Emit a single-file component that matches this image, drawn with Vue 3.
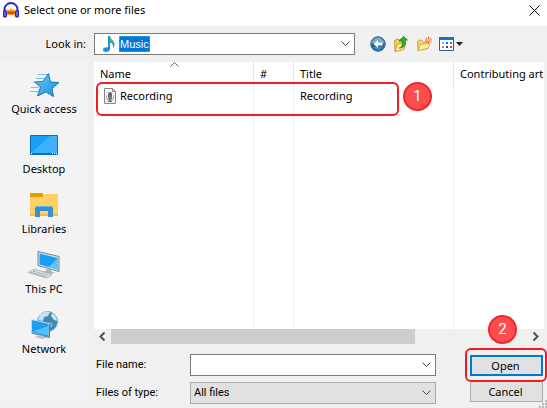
<template>
  <div class="dialog">
    <header class="titlebar">
      <svg class="app-icon" viewBox="0 0 16 16">
        <path d="M1.500 10V7.500a6.500 6.500 0 0 1 13 0V10" fill="none" stroke="#2a2ad0" stroke-width="2" />
        <path d="M3 10 4.500 7 6.500 8 8 5.500 9.500 8 11.500 7 13 10 11.500 13.500 8 12.500 4.500 13.500Z" fill="#ffb400" />
        <path d="M3.500 11 6 9 7 10 8 8 9 10 10 9 12.500 11 10 12 8 12.500 6 12Z" fill="#ec3414" />
        <rect x="0" y="8" width="4" height="7.500" rx="1.500" fill="#2424cc" />
        <rect x="12" y="8" width="4" height="7.500" rx="1.500" fill="#2424cc" />
        <path d="M2 9.500v4.500M14 9.500v4.500" stroke="#9fa8f4" />
      </svg>
      <h1 class="title">Select one or more files</h1>
      <button class="plain close" aria-label="Close">
        <svg width="11" height="11" viewBox="0 0 11 11"><path d="M.5.5l10 10M10.500.5l-10 10" stroke="#111" fill="none" /></svg>
      </button>
    </header>

    <div class="toolbar">
      <label class="look-label" for="look-in">Look in:</label>
      <div class="look-box">
        <svg class="note" width="12" height="16" viewBox="0 0 12 16">
          <path d="M5 0h2c0 4 5 4 4.500 9-.2 1.500-1 2.500-1.500 3 .5-3-.5-4.500-3-5.500V13c0 2-2 3-4 3s-3-1-3-2.300C0 12 2 11 5 11.500Z" fill="#1e8fe0" />
          <path d="M7 1c1 3 5 4 4.500 8-1-2.500-3-3-4.500-4Z" fill="#55c43a" />
        </svg>
        <select id="look-in" v-model="folder" class="look-select">
          <option>Music</option>
        </select>
        <svg class="chevron" width="9" height="6" viewBox="0 0 9 6"><path d="M.5.5l4 4 4-4" /></svg>
      </div>
      <nav class="tools">
        <button class="plain" aria-label="Back">
          <svg width="16" height="16" viewBox="0 0 16 16">
            <circle cx="8" cy="8" r="7.300" fill="#276399" stroke="#4a7596" />
            <path d="M1.500 8a6.500 6.500 0 0 1 13 0c-3-2-9-2-13 0Z" fill="#7ba7c9" />
            <path d="M3 10.500c2 4 8 4 10 0-2 1-8 1-10 0Z" fill="#2c9bdc" />
            <path d="M3.500 8 8 4v2.600h4.500v2.800H8V12Z" fill="#fff" />
          </svg>
        </button>
        <button class="plain" aria-label="Up one level">
          <svg width="16" height="16" viewBox="0 0 16 16">
            <path d="M1.500 4.500 5 3l1 1 4-1v10l-8 2.500Z" fill="#f1cf62" stroke="#c99f35" />
            <path d="M2 15.500 4.500 8 13 6l-2 7.500Z" fill="#fdeb94" stroke="#cda638" />
            <path d="M6.500 12c3-1 3-3 2.500-7H6l4.500-4.500L14.500 4h-2.300c.6 5-.7 8-5.700 8Z" fill="#35ad2d" stroke="#187e19" stroke-width=".8" />
          </svg>
        </button>
        <button class="plain" aria-label="Create new folder">
          <svg width="16" height="16" viewBox="0 0 16 16">
            <path d="M1.500 5.500 3 4l3 .5 1 1.500 5-.5v7L2 14.500Z" fill="#f3d36c" stroke="#d0a743" />
            <path d="M2 14.500 4 8.500l10-1.500-2 5.500Z" fill="#fdeb9e" stroke="#d7b04c" />
            <path d="M12.500.5v7M9 4h7M10 1.500l5 5M15 1.500l-5 5" stroke="#ee5c2a" />
            <circle cx="12.500" cy="4" r="1.500" fill="#ffc25b" />
          </svg>
        </button>
        <button class="plain" aria-label="View menu">
          <svg width="25" height="14" viewBox="0 0 25 14">
            <path d="M.5.5h14v13H.5Z" fill="#fff" stroke="#1863ad" />
            <path d="M0 0h15v3H0Z" fill="#1674c8" />
            <path d="M3 5h2v2H3Z" fill="#a5abb9" /><path d="M7 5h2v2H7Z" fill="#2265d5" /><path d="M11 5h2v2h-2Z" fill="#2e9a45" />
            <path d="M3 9h2v2H3Z" fill="#ee7447" /><path d="M7 9h2v2H7Z" fill="#1c3fae" /><path d="M11 9h2v2h-2Z" fill="#bd454a" />
            <path d="M17 5h7l-3.500 4Z" fill="#222" />
          </svg>
        </button>
      </nav>
    </div>

    <div class="body">
      <aside class="places">
        <button v-for="place in places" :key="place" class="plain place">
          <svg v-if="place === 'Quick access'" width="32" height="32" viewBox="0 0 32 32">
            <defs>
              <linearGradient id="star" x1="0" y1="0" x2="1" y2="1"><stop stop-color="#69c9f5" /><stop offset="1" stop-color="#168edb" /></linearGradient>
            </defs>
            <path d="M10 5.500h11M8 9.500h9M3 18.500h8M2 22.500h8M10 13.500h5" stroke="#7cbfe9" />
            <path d="M20.500 4.500 22.500 13l8.500.5-7 6L25.500 27.500l-7.500-4.500-8.500 4 3-9-6-5 8.500-.5Z" fill="url(#star)" stroke="#1878b9" />
          </svg>
          <svg v-else-if="place === 'Desktop'" width="32" height="32" viewBox="0 0 32 32">
            <path d="M2.500 6.500h27v19h-27Z" fill="#18a0fb" stroke="#0871bb" />
            <path d="M3 24 22 7h7v17Z" fill="#41b0fb" />
            <path d="M3 24.500h26" stroke="#0773bd" />
            <path d="M3 24.500h1M24 24.500h1M26 24.500h1M28 24.500h1" stroke="#fff" />
          </svg>
          <svg v-else-if="place === 'Libraries'" width="32" height="32" viewBox="0 0 32 32">
            <path d="M2 4h12l2 2v3H2Z" fill="#e29c04" />
            <path d="M2 8h12l3-3h13v22H2Z" fill="#ffd163" />
            <path d="M2 25h28v2H2Z" fill="#f5bd43" />
            <path d="M9 17h14l2 2v9h-5v-6h-8v6H7v-9Z" fill="#378fcf" />
            <path d="M8 17.500h16" stroke="#67b5e7" />
          </svg>
          <svg v-else-if="place === 'This PC'" width="32" height="32" viewBox="0 0 32 32">
            <path d="M10 2.500 31 7.500v15L10 16.500Z" fill="#d9e4e9" stroke="#71848e" />
            <path d="M11.500 4.500 29.500 9v11.500l-18-5Z" fill="#159ff5" />
            <path d="M29.500 9v11.500L21 18Z" fill="#5cc3fb" />
            <path d="m19 19 5 1.500-1 2 4 1-4 1.500-9-2.500 4-.5Z" fill="#aab5bb" />
            <path d="m6 20 18 5.500-5 3.500L0 23.500Z" fill="#dbe0e3" stroke="#9ea8ad" stroke-width=".7" />
            <path d="m5 22 15 4.500M3 23.500l15 4.500" stroke="#929da3" stroke-dasharray="2 1" />
          </svg>
          <svg v-else width="32" height="32" viewBox="0 0 32 32">
            <circle cx="19.500" cy="12.500" r="10" fill="#3f88b4" stroke="#77a5bd" />
            <path d="M12 5c4-3 8-3 10-2l-2 4-4 1-1 4-5-1ZM24 4c4 2 5 5 5 8l-3-1-3-4Z" fill="#c2e3ef" />
            <path d="m21 13 4 1-1 5-3-2Z" fill="#69add0" />
            <path d="M3.500 10.500 21 14.500v14L3.500 23.500Z" fill="#1a9ff2" stroke="#c7dbe5" />
            <path d="M5 22.500 20 17v9.500Z" fill="#53befa" />
            <path d="M21.500 15v13.500L3.500 24" stroke="#567b90" fill="none" />
            <path d="m11 26 4 1 5 2-6 1-7-2Z" fill="#b8c2c7" />
          </svg>
          <span>{{ place }}</span>
        </button>
      </aside>

      <main class="content">
        <div class="list">
          <table class="files">
            <colgroup><col class="c-name" /><col class="c-num" /><col class="c-title" /><col /></colgroup>
            <thead>
              <tr><th>Name</th><th>#</th><th>Title</th><th>Contributing art</th></tr>
            </thead>
            <tbody>
              <tr v-for="file in files" :key="file.name" class="file-row">
                <td>
                  <div class="file-name">
                    <svg width="12" height="16" viewBox="0 0 12 16">
                      <path d="M.5.5h8l3 3v12H.5Z" fill="#f4f4f4" stroke="#868686" />
                      <path d="M8.500.5v3h3" fill="none" stroke="#868686" />
                      <path d="M2.500 7.500v2a3.500 3 0 0 0 7 0v-2" fill="none" stroke="#a0a0a0" />
                      <rect x="4" y="4" width="4" height="8" rx="2" fill="#606974" />
                      <path d="M4 9.500h4" stroke="#e8662c" /><path d="M6 12v2M4 13.500h4" stroke="#666" />
                    </svg>
                    {{ file.name }}
                  </div>
                </td>
                <td></td><td>{{ file.title }}</td><td></td>
              </tr>
              <tr class="filler"><td></td><td></td><td></td><td></td></tr>
            </tbody>
          </table>
          <svg class="sort" width="9" height="5" viewBox="0 0 9 5"><path d="M.5 4.500l4-4 4 4" fill="none" stroke="#666" /></svg>
          <div class="mark mark-file"></div>
          <span class="badge badge-one">1</span>
        </div>
        <div class="scrollbar">
          <button class="plain arrow" aria-label="Scroll left"><svg width="7" height="9" viewBox="0 0 7 9"><path d="M5.500.5l-4 4 4 4" /></svg></button>
          <div class="track"><div class="thumb"></div></div>
          <button class="plain arrow" aria-label="Scroll right"><svg width="7" height="9" viewBox="0 0 7 9"><path d="M1.500.5l4 4-4 4" /></svg></button>
        </div>
        <form class="form" @submit.prevent>
          <div class="fields">
            <div class="field">
              <label for="file-name">File name:</label>
              <div class="combo">
                <input id="file-name" v-model="fileName" type="text" />
                <svg class="chevron" width="9" height="6" viewBox="0 0 9 6"><path d="M.5.5l4 4 4-4" /></svg>
              </div>
            </div>
            <div class="field">
              <label for="file-type">Files of type:</label>
              <div class="combo gray">
                <select id="file-type" v-model="fileType"><option>All files</option></select>
                <svg class="chevron" width="9" height="6" viewBox="0 0 9 6"><path d="M.5.5l4 4 4-4" /></svg>
              </div>
            </div>
          </div>
          <div class="actions">
            <button class="btn primary" type="submit">Open</button>
            <button class="btn" type="button">Cancel</button>
            <div class="mark mark-open"></div>
            <span class="badge badge-two">2</span>
          </div>
        </form>
      </main>
    </div>
    <svg class="grip" width="8" height="8" viewBox="0 0 8 8"><path d="M6 0h2v2H6ZM3 3h2v2H3ZM6 3h2v2H6ZM0 6h2v2H0ZM3 6h2v2H3ZM6 6h2v2H6Z" fill="#bbb" /></svg>
  </div>
</template>

<script setup>
import { ref } from 'vue';

const places = ['Quick access', 'Desktop', 'Libraries', 'This PC', 'Network'];
const files = ref([{ name: 'Recording', title: 'Recording' }]);

const folder = ref('Music');
const fileName = ref('');
const fileType = ref('All files');
</script>

<style>
body {
  margin: 0;
}
</style>

<style scoped>
* {
  box-sizing: border-box;
}

.dialog {
  position: relative;
  display: flex;
  flex-direction: column;
  height: 100vh;
  background: #f0f0f0;
  color: #000;
  font-family: "Noto Sans", "Open Sans", sans-serif;
  font-size: 11px;
  line-height: 16px;
  overflow: hidden;
}

svg {
  display: block;
  flex: none;
}

button,
input,
select {
  font: inherit;
  color: inherit;
}

.plain {
  border: 0;
  padding: 0;
  background: none;
}

.titlebar {
  display: flex;
  align-items: center;
  height: 26px;
  padding: 0 7px 6px 3px;
  background: #fff;
}

.app-icon {
  width: 16px;
  height: 16px;
}

.title {
  flex: 1;
  margin: 0 0 0 5px;
  font-size: 11px;
  font-weight: 400;
}

.toolbar {
  display: flex;
  align-items: center;
  height: 36px;
}

.look-label {
  width: 94px;
  padding-right: 8px;
  text-align: right;
}

.look-box {
  display: flex;
  align-items: center;
  flex: 0 1 261px;
  height: 22px;
  padding: 0 4px 0 8px;
  border: 1px solid #7a7a7a;
  background: #fff;
}

.look-select {
  appearance: none;
  margin-left: 4px;
  padding: 0;
  height: 16px;
  border: 1px dotted #d88a35;
  border-radius: 0;
  background: #0078d7;
  color: #fff;
  font-family: "Liberation Sans", sans-serif;
  font-size: 11px;
  line-height: 14px;
}

.chevron {
  margin-left: auto;
  fill: none;
  stroke: #444;
}

.tools {
  display: flex;
  align-items: center;
  gap: 7px;
  margin-left: 15px;
}

.body {
  display: flex;
  flex: 1;
  min-height: 0;
}

.places {
  width: 87px;
  margin: 0 6px 8px 1px;
  padding: 7px 1px 0 0;
  background: #f3f3f3;
}

.place {
  display: flex;
  flex-direction: column;
  align-items: center;
  width: 100%;
  height: 60px;
}

.content {
  display: flex;
  flex: 1;
  flex-direction: column;
  min-width: 0;
  padding-right: 3px;
}

.list {
  position: relative;
  flex: 1;
  min-height: 0;
  background: #fff;
}

.files {
  width: 100%;
  height: 100%;
  table-layout: fixed;
  border-collapse: separate;
  border-spacing: 0;
}

.c-name {
  width: 160px;
}

.c-num {
  width: 40px;
}

.c-title {
  width: 160px;
}

.files th {
  height: 24px;
  padding: 0 0 0 6px;
  border-right: 1px solid #e5e5e5;
  font-weight: 400;
  text-align: left;
  white-space: nowrap;
}

.files td {
  padding: 0 0 0 6px;
  border-right: 1px solid #ebf2fa;
}

.files th:last-child,
.files td:last-child {
  border-right: 0;
}

.file-row td {
  height: 20px;
}

.filler td {
  height: 100%;
}

.file-name {
  display: flex;
  align-items: center;
  gap: 4px;
  padding-left: 4px;
}

.sort {
  position: absolute;
  top: 0;
  left: 76px;
}

.mark {
  position: absolute;
  border: 2px solid #f21b22;
  border-radius: 6px;
  pointer-events: none;
}

.mark-file {
  top: 20px;
  left: 2px;
  width: 303px;
  height: 34px;
}

.badge {
  position: absolute;
  width: 29px;
  height: 29px;
  border: 2px solid #f2262b;
  border-radius: 50%;
  background: #fd4d4f;
  color: #fff;
  font-family: Roboto, sans-serif;
  font-size: 15px;
  line-height: 25px;
  text-align: center;
}

.badge-one {
  top: 20px;
  left: 309px;
}

.scrollbar {
  display: flex;
  height: 15px;
}

.arrow {
  display: flex;
  align-items: center;
  justify-content: center;
  width: 17px;
}

.arrow path {
  fill: none;
  stroke: #505050;
  stroke-width: 2;
}

.track {
  flex: 1;
}

.thumb {
  width: 73%;
  height: 100%;
  background: #cdcdcd;
}

.form {
  display: flex;
  justify-content: space-between;
  padding: 10px 1px 4px 2px;
}

.fields {
  display: flex;
  flex: 0 1 340px;
  flex-direction: column;
  gap: 6px;
}

.field {
  display: flex;
  align-items: center;
  font-family: Roboto, sans-serif;
}

.field label {
  width: 94px;
}

.combo {
  display: flex;
  align-items: center;
  flex: 1;
  height: 22px;
  padding-right: 4px;
  border: 1px solid #7a7a7a;
  background: #fff;
}

.combo.gray {
  border-color: #adadad;
  background: #e1e1e1;
}

.combo input,
.combo select {
  appearance: none;
  flex: 1;
  min-width: 0;
  padding: 0 3px;
  border: 0;
  background: transparent;
  outline: 0;
}

.actions {
  position: relative;
  display: flex;
  flex-direction: column;
  gap: 5px;
  width: 73px;
  padding-top: 1px;
}

.btn {
  height: 21px;
  padding: 0 2px 0 0;
  border: 1px solid #adadad;
  background: #e1e1e1;
  line-height: 16px;
}

.btn.primary {
  border: 2px solid #0078d7;
}

.mark-open {
  top: -6px;
  left: -5px;
  width: 82px;
  height: 34px;
}

.badge-two {
  top: -39px;
  left: 18px;
}

.grip {
  position: absolute;
  right: 0;
  bottom: 0;
}
</style>
